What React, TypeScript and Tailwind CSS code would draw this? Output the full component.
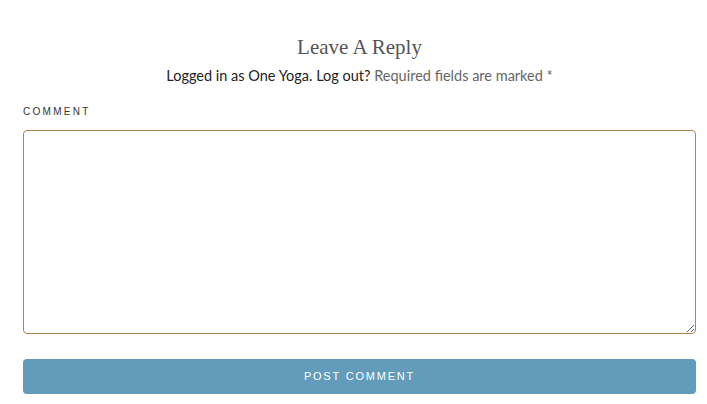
export default function App() {
  return (
    <div className="w-[707px] h-[404px] bg-white pl-[23px] pr-[11px] pt-[33px] font-['Lato',sans-serif]">
      <h3 className="text-center font-['Liberation_Serif',serif] text-[21px] leading-[28px] text-[#555]">
        Leave A Reply
      </h3>
      <p className="mt-[5px] text-center text-[14.5px] leading-[20px] text-[#222]">
        Logged in as One Yoga. Log out? <span className="text-[#666]">Required fields are marked *</span>
      </p>
      <label className="mt-[19px] block font-['Liberation_Sans',sans-serif] text-[10px] leading-[14px] font-normal tracking-[2.3px] text-[#333]">
        COMMENT
      </label>
      <textarea className="mt-[11px] block h-[204px] w-full rounded-[4px] border border-[#b0834f] outline-none" />
      <button className="mt-[25px] block h-[35px] w-full rounded-[4px] bg-[#629cba] font-['Liberation_Sans',sans-serif] text-[11px] tracking-[1.8px] text-white">
        POST COMMENT
      </button>
    </div>
  );
}
